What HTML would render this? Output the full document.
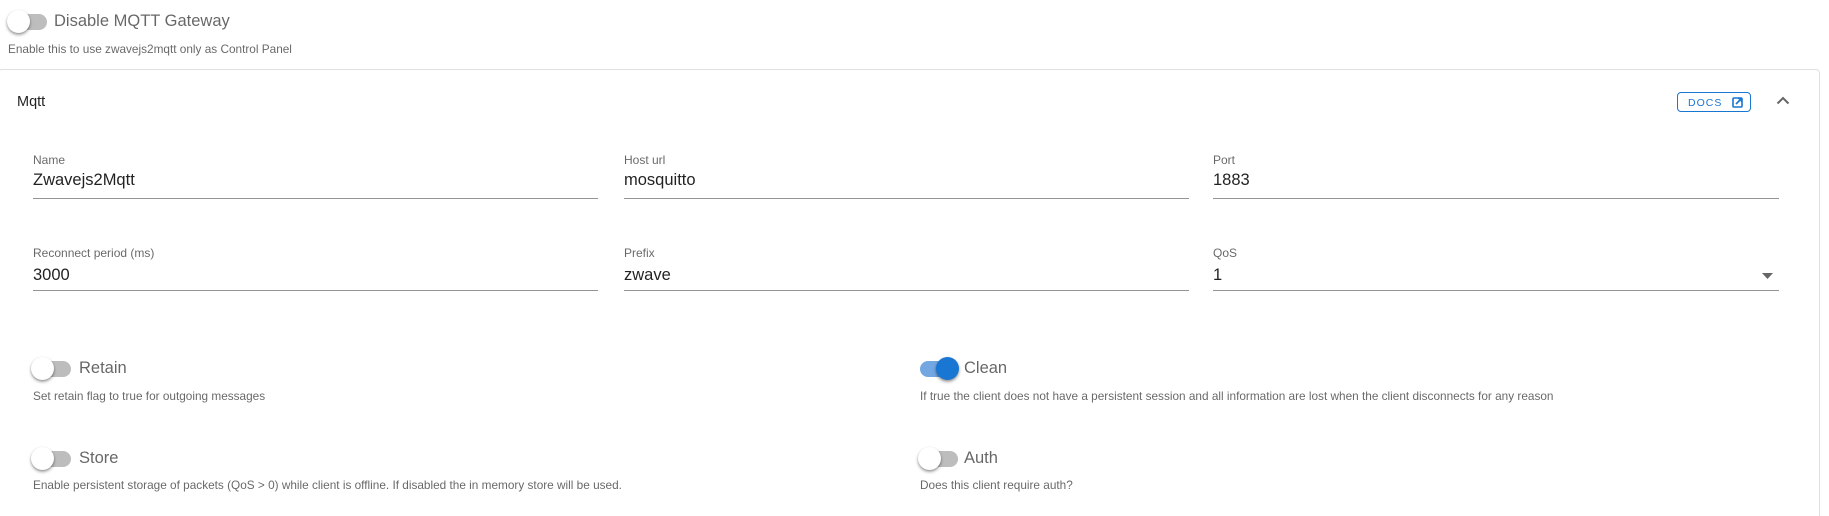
<!DOCTYPE html>
<html style="width:1829px;height:516px;overflow:hidden"><head><meta charset="utf-8"><style>
*{margin:0;padding:0;box-sizing:border-box}
body{width:1829px;height:516px;background:#fff;font-family:"Liberation Sans",sans-serif;position:relative;overflow:hidden;color:rgba(0,0,0,.87)}
.a{position:absolute;white-space:nowrap}
.tr{position:absolute;width:38px;height:16px;border-radius:8px;background:#bdbdbd}
.th{position:absolute;width:23px;height:23px;border-radius:50%;background:#fff;box-shadow:0 2px 3px rgba(0,0,0,.3),0 1px 2px rgba(0,0,0,.2)}
.tl{font-size:16.5px;color:rgba(0,0,0,.6)}
.hint{font-size:11.8px;color:rgba(0,0,0,.6)}
.lab{font-size:12px;color:rgba(0,0,0,.6)}
.val{font-size:16.5px;color:rgba(0,0,0,.87)}
.ul{position:absolute;height:1px;background:#949494}
</style></head><body>
<div class="tr" style="left:9px;top:14px"></div><div class="th" style="left:7px;top:10px"></div>
<div class="a tl" style="left:54px;top:12px">Disable MQTT Gateway</div>
<div class="a hint" style="left:8px;top:42px">Enable this to use zwavejs2mqtt only as Control Panel</div>

<div style="position:absolute;left:-2px;top:69px;width:1822px;height:460px;border:1px solid #e0e0e0;border-radius:4px"></div>
<div class="a" style="left:17px;top:94px;font-size:14.5px">Mqtt</div>
<div class="a" style="left:1677px;top:92px;width:74px;height:20px;border:1px solid #1976d2;border-radius:4px;color:#1976d2;font-size:10.5px;letter-spacing:1px;padding:4px 0 0 10px">DOCS
<svg style="position:absolute;left:54px;top:4px" width="11" height="11" viewBox="0 0 11 11"><rect x="1" y="1" width="9" height="9" rx="1" fill="none" stroke="#1976d2" stroke-width="1.6"/><path d="M4 7L9 2M6 1.5H9.5V5" stroke="#1976d2" stroke-width="1.6" fill="none"/></svg></div>
<svg class="a" style="left:1776px;top:96px" width="14" height="9" viewBox="0 0 14 9"><path d="M1.5 7.5L7 2l5.5 5.5" stroke="#666" stroke-width="2" fill="none"/></svg>

<div class="a lab" style="left:33px;top:153px">Name</div><div class="a val" style="left:33px;top:171px">Zwavejs2Mqtt</div><div class="ul" style="left:33px;top:198px;width:565px"></div>
<div class="a lab" style="left:624px;top:153px">Host url</div><div class="a val" style="left:624px;top:171px">mosquitto</div><div class="ul" style="left:624px;top:198px;width:565px"></div>
<div class="a lab" style="left:1213px;top:153px">Port</div><div class="a val" style="left:1213px;top:171px">1883</div><div class="ul" style="left:1213px;top:198px;width:566px"></div>

<div class="a lab" style="left:33px;top:246px">Reconnect period (ms)</div><div class="a val" style="left:33px;top:266px">3000</div><div class="ul" style="left:33px;top:290px;width:565px"></div>
<div class="a lab" style="left:624px;top:246px">Prefix</div><div class="a val" style="left:624px;top:266px">zwave</div><div class="ul" style="left:624px;top:290px;width:565px"></div>
<div class="a lab" style="left:1213px;top:246px">QoS</div><div class="a val" style="left:1213px;top:266px">1</div><div class="ul" style="left:1213px;top:290px;width:566px"></div>
<svg class="a" style="left:1762px;top:273px" width="11" height="6"><path d="M0 0h11L5.5 6z" fill="#666"/></svg>

<div class="tr" style="left:33px;top:361px"></div><div class="th" style="left:31px;top:357px"></div>
<div class="a tl" style="left:79px;top:359px">Retain</div>
<div class="a hint" style="left:33px;top:389px">Set retain flag to true for outgoing messages</div>

<div class="tr" style="left:920px;top:361px;background:#73a7e2"></div><div class="th" style="left:936px;top:357px;background:#1976d2"></div>
<div class="a tl" style="left:964px;top:359px">Clean</div>
<div class="a hint" style="left:920px;top:389px">If true the client does not have a persistent session and all information are lost when the client disconnects for any reason</div>

<div class="tr" style="left:33px;top:451px"></div><div class="th" style="left:31px;top:447px"></div>
<div class="a tl" style="left:79px;top:449px">Store</div>
<div class="a hint" style="left:33px;top:478px">Enable persistent storage of packets (QoS &gt; 0) while client is offline. If disabled the in memory store will be used.</div>

<div class="tr" style="left:920px;top:451px"></div><div class="th" style="left:918px;top:447px"></div>
<div class="a tl" style="left:964px;top:449px">Auth</div>
<div class="a hint" style="left:920px;top:478px">Does this client require auth?</div>
</body></html>
